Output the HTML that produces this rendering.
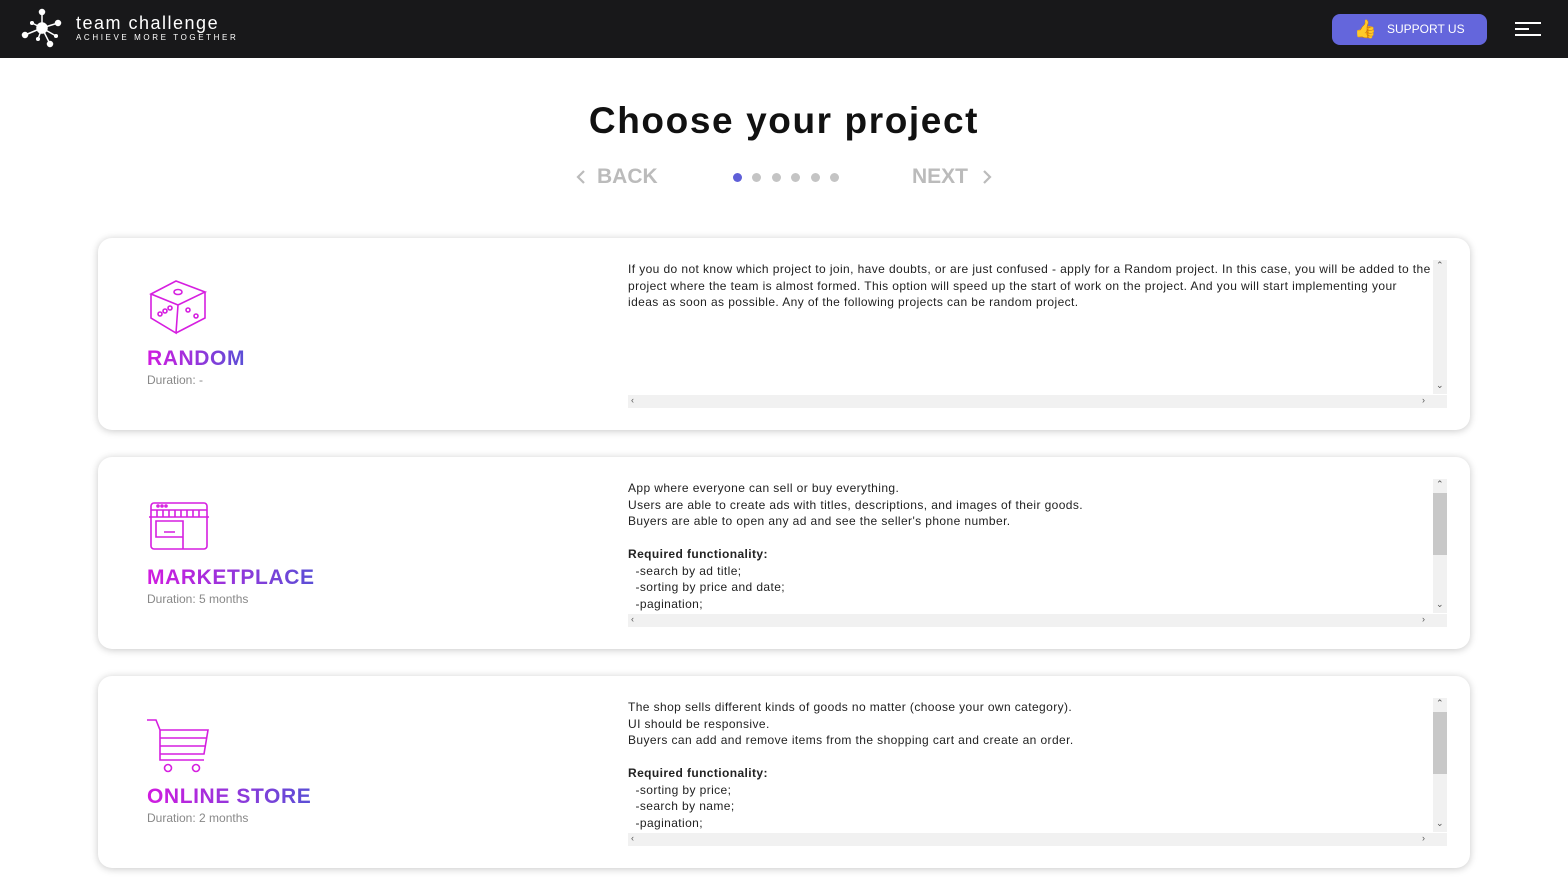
<!DOCTYPE html>
<html><head><meta charset="utf-8"><style>
*{margin:0;padding:0;box-sizing:border-box}
body{width:1568px;height:882px;overflow:hidden;background:#fff;font-family:"Liberation Sans",sans-serif;position:relative}
.hdr{position:absolute;left:0;top:0;width:1568px;height:58px;background:#18181a}
.brand{position:absolute;left:76px;top:13px;color:#fff;font-size:18px;letter-spacing:1.5px}
.tag{position:absolute;left:76px;top:33px;color:#fff;font-size:8px;letter-spacing:2.6px}
.sup{position:absolute;left:1332px;top:14px;width:155px;height:31px;background:#6466dc;border-radius:8px;color:#fff;font-size:12px;line-height:31px;padding-left:55px}
.burg{position:absolute;left:1515px;top:22px}
.burg div{height:2px;background:#fff;margin-bottom:4px}
h1{position:absolute;top:100px;width:100%;text-align:center;font-size:37px;font-weight:bold;color:#111;letter-spacing:1.6px}
.nav{position:absolute;top:165px;font-size:21px;font-weight:bold;color:#bbb}
.dot{position:absolute;top:173px;width:9px;height:9px;border-radius:50%;background:#c4c4c4}
.card{position:absolute;left:98px;width:1372px;height:192px;border-radius:14px;background:#fff;box-shadow:0 1px 8px rgba(0,0,0,.22)}
.ttl{position:absolute;left:49px;font-size:21px;font-weight:bold;background:linear-gradient(90deg,#d21be0,#5a4fd6);-webkit-background-clip:text;color:transparent;letter-spacing:.6px}
.dur{position:absolute;left:49px;font-size:12px;color:#888}
.txt{position:absolute;left:530px;top:23px;width:805px;height:133px;overflow:hidden;font-size:12px;line-height:16.5px;color:#222;letter-spacing:0.4px;white-space:nowrap}
.vs{position:absolute;left:1335px;top:22px;width:14px;height:134px;background:#f1f1f1}
.hs{position:absolute;left:530px;top:157px;width:819px;height:13px;background:#f1f1f1;font-size:10px;color:#555}
.thumb{position:absolute;left:0;top:14px;width:14px;height:62px;background:#c8c8c8}
.ar{position:absolute;font-size:9px;color:#555}
</style></head><body>
<div class="hdr">
<svg style="position:absolute;left:20px;top:8px" width="44" height="42" viewBox="0 0 44 42"><g stroke="#fff" stroke-width="1.5" fill="#fff"><line x1="22" y1="20" x2="22" y2="4"/><line x1="22" y1="20" x2="38" y2="15"/><line x1="22" y1="20" x2="5" y2="27"/><line x1="22" y1="20" x2="30" y2="36"/><line x1="22" y1="20" x2="12" y2="15"/><line x1="22" y1="20" x2="18" y2="31"/><line x1="22" y1="20" x2="36" y2="28"/><circle cx="22" cy="20" r="5"/><circle cx="22" cy="4" r="2.5"/><circle cx="38" cy="15" r="2.5"/><circle cx="5" cy="27" r="2.5"/><circle cx="30" cy="36" r="2.5"/><circle cx="12" cy="15" r="1.3"/><circle cx="18" cy="31" r="1.3"/><circle cx="36" cy="28" r="1.3"/></g></svg>
<div class="brand">team challenge</div><div class="tag">ACHIEVE MORE TOGETHER</div>
<div class="sup"><span style="position:absolute;left:22px;top:0;font-size:18px">👍</span>SUPPORT US</div>
<div class="burg"><div style="width:26px"></div><div style="width:14px"></div><div style="width:26px"></div></div>
</div>
<h1>Choose your project</h1>
<svg style="position:absolute;left:576px;top:170px" width="10" height="14" viewBox="0 0 10 14"><path d="M8 1 L2 7 L8 13" stroke="#bbb" stroke-width="2.2" fill="none"/></svg>
<div class="nav" style="left:597px">BACK</div>
<div class="nav" style="left:912px">NEXT</div>
<svg style="position:absolute;left:982px;top:170px" width="10" height="14" viewBox="0 0 10 14"><path d="M2 1 L8 7 L2 13" stroke="#bbb" stroke-width="2.2" fill="none"/></svg>
<div class="dot" style="left:733px;background:#5f5fd8"></div><div class="dot" style="left:752px"></div><div class="dot" style="left:772px"></div><div class="dot" style="left:791px"></div><div class="dot" style="left:811px"></div><div class="dot" style="left:830px"></div>

<div class="card" style="top:238px">
<svg style="position:absolute;left:50px;top:40px" width="60" height="58" viewBox="0 0 60 58" fill="none" stroke="#d61fe0" stroke-width="1.6"><path d="M3 16 L28 3 L57 14 L30 27 Z M3 16 L3 40 L28 55 L30 27 M57 14 L57 40 L28 55"/><ellipse cx="30" cy="14" rx="4" ry="2.5"/><circle cx="12" cy="36" r="2"/><circle cx="17" cy="33" r="2"/><circle cx="22" cy="30" r="2"/><circle cx="40" cy="32" r="2"/><circle cx="48" cy="38" r="2"/></svg>
<div class="ttl" style="top:109px">RANDOM</div><div class="dur" style="top:135px">Duration: -</div>
<div class="txt">If you do not know which project to join, have doubts, or are just confused - apply for a Random project. In this case, you will be added to the<br>project where the team is almost formed. This option will speed up the start of work on the project. And you will start implementing your<br>ideas as soon as possible. Any of the following projects can be random project.</div>
<div class="vs"><span class="ar" style="left:3px;top:0">⌃</span><span class="ar" style="left:3px;top:120px">⌄</span></div>
<div class="hs"><span class="ar" style="left:3px;top:0">‹</span><span class="ar" style="left:794px;top:0">›</span></div>
</div>

<div class="card" style="top:457px">
<svg style="position:absolute;left:50px;top:44px" width="62" height="50" viewBox="0 0 62 50" fill="none" stroke="#d61fe0" stroke-width="1.6"><rect x="3" y="2" width="56" height="46" rx="3"/><path d="M1 16 L61 16 M3 9 L59 9 M9 9 V16 M15 9V16 M21 9V16 M27 9V16 M33 9V16 M39 9V16 M45 9V16 M51 9V16 M35 20 V48 M8 20 H35 V36 H8 Z M16 31 H27"/><circle cx="10" cy="5" r="1"/><circle cx="14" cy="5" r="1"/><circle cx="18" cy="5" r="1"/></svg>
<div class="ttl" style="top:109px">MARKETPLACE</div><div class="dur" style="top:135px">Duration: 5 months</div>
<div class="txt">App where everyone can sell or buy everything.<br>Users are able to create ads with titles, descriptions, and images of their goods.<br>Buyers are able to open any ad and see the seller's phone number.<br><br><b>Required functionality:</b><br>&nbsp; -search by ad title;<br>&nbsp; -sorting by price and date;<br>&nbsp; -pagination;</div>
<div class="vs"><div class="thumb"></div><span class="ar" style="left:3px;top:0">⌃</span><span class="ar" style="left:3px;top:120px">⌄</span></div>
<div class="hs"><span class="ar" style="left:3px;top:0">‹</span><span class="ar" style="left:794px;top:0">›</span></div>
</div>

<div class="card" style="top:676px">
<svg style="position:absolute;left:48px;top:42px" width="64" height="56" viewBox="0 0 64 56" fill="none" stroke="#d61fe0" stroke-width="1.6"><path d="M1 2 H10 L14 12 V42 H58 M14 12 H62 L58 36 H14 M14 20 H60 M14 28 H59"/><circle cx="22" cy="50" r="3.5"/><circle cx="50" cy="50" r="3.5"/></svg>
<div class="ttl" style="top:109px">ONLINE STORE</div><div class="dur" style="top:135px">Duration: 2 months</div>
<div class="txt">The shop sells different kinds of goods no matter (choose your own category).<br>UI should be responsive.<br>Buyers can add and remove items from the shopping cart and create an order.<br><br><b>Required functionality:</b><br>&nbsp; -sorting by price;<br>&nbsp; -search by name;<br>&nbsp; -pagination;</div>
<div class="vs"><div class="thumb"></div><span class="ar" style="left:3px;top:0">⌃</span><span class="ar" style="left:3px;top:120px">⌄</span></div>
<div class="hs"><span class="ar" style="left:3px;top:0">‹</span><span class="ar" style="left:794px;top:0">›</span></div>
</div>
</body></html>
